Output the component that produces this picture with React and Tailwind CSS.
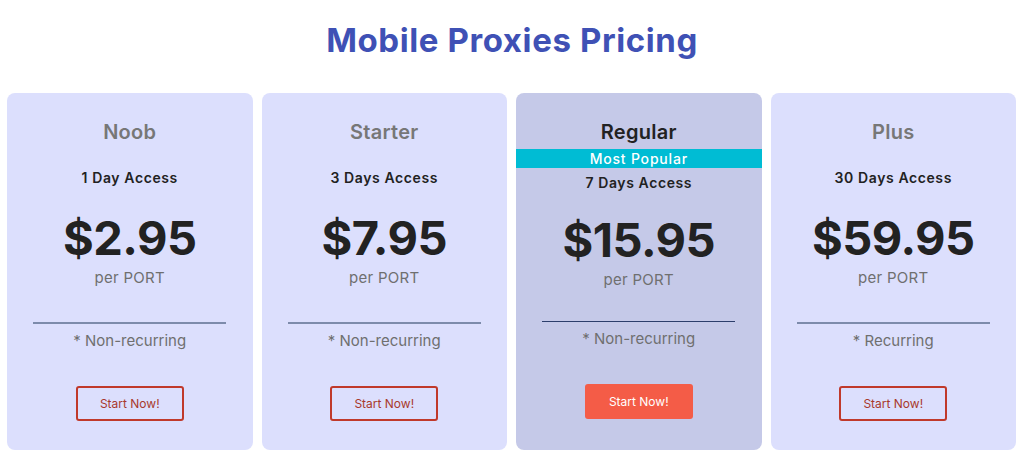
import React from 'react';

const plans = [
    { name: "Noob", access: "1 Day Access", price: "$2.95", note: "* Non-recurring" },
    { name: "Starter", access: "3 Days Access", price: "$7.95", note: "* Non-recurring" },
    { name: "Regular", access: "7 Days Access", price: "$15.95", note: "* Non-recurring", popular: true },
    { name: "Plus", access: "30 Days Access", price: "$59.95", note: "* Recurring" },
]

function PlanCard({ plan }) {
    const popular = plan.popular

    return (
        <div className={"flex-1 rounded-[8px] flex flex-col items-center pt-[25px] " + (popular ? "bg-[#c5c9e8] pb-[31px]" : "bg-[#dcdffd] pb-[29px]")}>
            <div className={"text-[20px] leading-[28px] font-semibold tracking-[0.3px] " + (popular ? "text-[#222222]" : "text-[#777777]")}>
                {plan.name}
            </div>
            {popular && (
                <div className="mt-[3px] w-full h-[19px] bg-[#00bcd4] text-white text-[14px] leading-[19px] text-center font-medium tracking-[0.8px]">
                    Most Popular
                </div>
            )}
            <div className={"text-[14px] leading-[20px] font-semibold text-[#222222] tracking-[0.6px] " + (popular ? "mt-[5px]" : "mt-[22px]")}>
                {plan.access}
            </div>
            <div className={"text-[47px] leading-[56px] font-bold text-[#222222] tracking-[-0.5px] " + (popular ? "mt-[19px]" : "mt-[22px]")}>
                {plan.price}
            </div>
            <div className="mt-[2px] text-[15px] leading-[20px] text-[#6f6f6f] tracking-[0.3px]">per PORT</div>
            {popular ? (
                <div className="mt-[31px] w-[193px] h-px bg-[#2c3e6b]" />
            ) : (
                <div className="mt-[34px] w-[193px] h-[2px] bg-[#7d8bab]" />
            )}
            <div className="mt-[7px] text-[15px] leading-[20px] text-[#6f6f6f]">{plan.note}</div>
            {popular ? (
                <button className="mt-[35px] w-[108px] h-[35px] rounded-[3px] bg-[#f45c47] text-white text-[12px]">
                    Start Now!
                </button>
            ) : (
                <button className="mt-[35px] w-[108px] h-[35px] rounded-[3px] border-2 border-[#c0392b] text-[#a8392c] text-[12px]">
                    Start Now!
                </button>
            )}
        </div>
    )
}

export default function App() {
    return (
        <div className="w-[1024px] h-[467px] bg-white font-['Inter',sans-serif]">
            <h1 className="pt-[20px] h-[93px] text-center text-[33px] leading-[40px] font-bold text-[#3f51b5] tracking-[0.6px]">
                Mobile Proxies Pricing
            </h1>
            <div className="flex gap-[9px] pl-[7px] pr-[8px]">
                {plans.map((plan) => (
                    <PlanCard key={plan.name} plan={plan} />
                ))}
            </div>
        </div>
    )
}
